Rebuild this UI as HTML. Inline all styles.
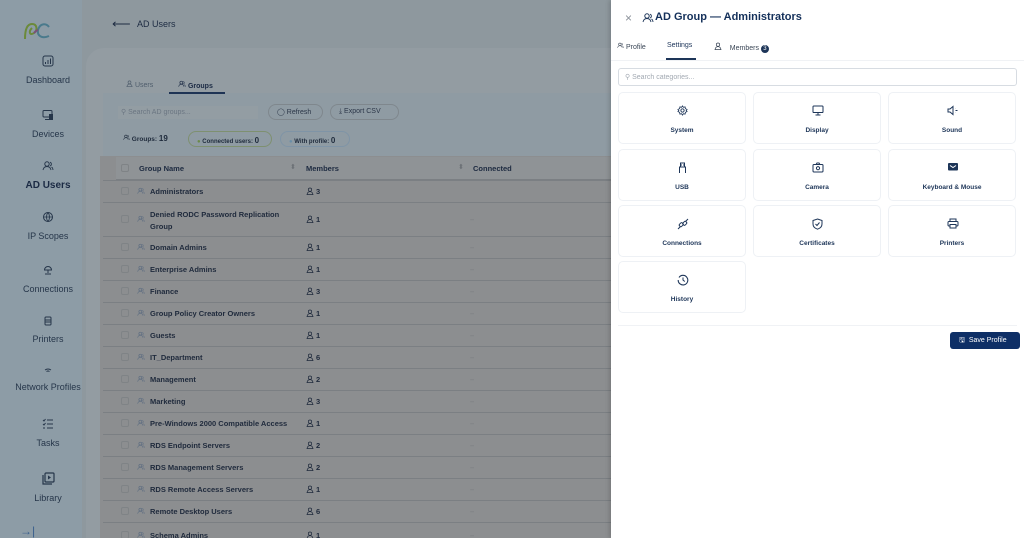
<!DOCTYPE html>
<html><head><meta charset="utf-8"><style>
*{box-sizing:border-box;margin:0;padding:0}
html,body{width:1024px;height:538px;overflow:hidden}
body{font-family:"Liberation Sans",sans-serif;background:#8e989e;position:relative}
.abs{position:absolute}
.side{left:0;top:0;width:82px;height:538px;background:#8d9ca6}
.nav{position:absolute;left:0;width:96px;text-align:center;font-size:9px;color:#26364a}
.nav svg{display:block;margin:0 auto 8px}
.card{left:86px;top:48px;width:540px;height:490px;background:#939ca2;border-radius:18px 0 0 0}
.tbl{left:100px;top:156px;width:511px;height:382px;background:#8c8e90}
.row{position:absolute;left:103px;width:508px;border-top:1px solid #7b7f83;font-size:7.5px;color:#1f2a3c;font-weight:bold}
.row .cb{position:absolute;left:18px;width:8px;height:8px;border:1px solid #7f8386;border-radius:2px}
.row .nm{position:absolute;left:47px}
.row .ic{position:absolute;left:34px;width:8px;height:8px}
.row .mb{position:absolute;left:203px}
.row .mb svg{vertical-align:-1px;margin-right:2px}
.row .dash{position:absolute;left:367px;color:#7d8184}
.drawer{left:611px;top:0;width:413px;height:538px;background:#fff;box-shadow:-2px 0 4px rgba(0,0,0,.15)}
.tile{position:absolute;width:128px;height:52px;border:1px solid #eef1f5;border-radius:5px;text-align:center;font-size:6.5px;font-weight:bold;color:#1d3558}
.tile svg{position:absolute;left:58px;top:12px}
.tile span{position:absolute;left:0;right:0;top:34px}
</style></head><body>
<svg width="0" height="0" style="position:absolute"><defs>
<symbol id="grp" viewBox="0 0 12 12"><circle cx="5" cy="4" r="2.2" fill="none" stroke="currentColor"/><path d="M1 10c.5-2.5 2-3.5 4-3.5s3.5 1 4 3.5M8 2.2a2 2 0 0 1 0 3.8M9.5 7c1 .6 1.4 1.6 1.5 3" fill="none" stroke="currentColor" stroke-width=".9"/></symbol>
<symbol id="usr" viewBox="0 0 12 12"><circle cx="6" cy="4" r="2.5" fill="none" stroke="currentColor" stroke-width="1.1"/><path d="M1.5 11.5c.5-3 2.2-4.5 4.5-4.5s4 1.5 4.5 4.5z" fill="none" stroke="currentColor" stroke-width="1.1"/></symbol>
</defs></svg>
<div class="abs side"></div>
<svg class="abs" style="left:22px;top:20px" width="30" height="22" viewBox="0 0 30 22"><path d="M3 19 C3 10 5 4 10 4 C15 4 16 10 12 13 C8 16 6 12 10 8" fill="none" stroke="#6b8a3a" stroke-width="2"/><path d="M27 7 C24 3 18 3 16 10 C15 16 20 19 27 16" fill="none" stroke="#4a7a8c" stroke-width="2"/><path d="M12 13 C14 11 15 10 16 10" stroke="#7a4e7a" stroke-width="2" fill="none"/></svg>
<div class="nav" style="top:55px"><svg width="12" height="12" viewBox="0 0 12 12"><rect x="1" y="1" width="10" height="10" rx="2" fill="none" stroke="#26364a"/><path d="M3.5 9V7M6 9V5M8.5 9V3.5" stroke="#26364a"/></svg>Dashboard</div>
<div class="nav" style="top:109px"><svg width="12" height="12" viewBox="0 0 12 12"><rect x="1" y="1.5" width="9" height="6.5" rx="1" fill="none" stroke="#26364a"/><rect x="7" y="5" width="4" height="6" fill="#26364a"/><path d="M3 10.5h4" stroke="#26364a"/></svg>Devices</div>
<div class="nav" style="top:160px;font-size:10px;font-weight:bold;color:#1b2a44"><svg width="12" height="12" style="color:#26364a"><use href="#grp"/></svg>AD Users</div>
<div class="nav" style="top:211px"><svg width="12" height="12" viewBox="0 0 12 12"><circle cx="6" cy="6" r="4.5" fill="none" stroke="#26364a"/><path d="M1.5 6h9M6 1.5c-2 2.5-2 6.5 0 9M6 1.5c2 2.5 2 6.5 0 9" fill="none" stroke="#26364a" stroke-width=".8"/></svg>IP Scopes</div>
<div class="nav" style="top:262px"><svg width="12" height="14" viewBox="0 0 12 14"><path d="M2.5 8a3.5 3.5 0 1 1 7 0z" fill="none" stroke="#26364a"/><path d="M6 8v3M3 12h6" stroke="#26364a"/></svg>Connections</div>
<div class="nav" style="top:316px"><svg width="10" height="10" viewBox="0 0 10 10"><rect x="2" y="1" width="6" height="8" rx="1" fill="none" stroke="#26364a"/><path d="M2 4h6M2 6h6" stroke="#26364a"/></svg>Printers</div>
<div class="nav" style="top:368px"><svg width="8" height="6" viewBox="0 0 8 6"><path d="M1 2q3-2 6 0M2.5 3.5q1.5-1 3 0" fill="none" stroke="#26364a"/></svg>Network Profiles</div>
<div class="nav" style="top:418px"><svg width="12" height="12" viewBox="0 0 12 12"><path d="M5 2h6M5 6h6M5 10h6M1 2l1 1 1.5-2M1 6l1 1 1.5-2M1 10h2" fill="none" stroke="#26364a"/></svg>Tasks</div>
<div class="nav" style="top:472px"><svg width="13" height="13" viewBox="0 0 13 13"><rect x="3" y="1" width="9" height="9" rx="1" fill="none" stroke="#26364a" stroke-width="1.2"/><path d="M1 3v9h9" fill="none" stroke="#26364a" stroke-width="1.2"/><path d="M6 3.5v4l3-2z" fill="#26364a"/></svg>Library</div>
<div class="abs" style="left:20px;top:524px;color:#3a5f8c;font-size:12px">→|</div>

<div class="abs" style="left:112px;top:16px;font-size:13px;color:#1d2b42">⟵</div>
<div class="abs" style="left:137px;top:19px;font-size:9px;color:#1d2b42">AD Users</div>
<div class="abs card"></div>
<div class="abs" style="left:103px;top:93px;width:508px;height:63px;background:#8f9ba3"></div>
<div class="abs" style="left:126px;top:80px;font-size:7px;color:#4f5d6c"><svg width="7" height="7" style="color:#4f5d6c"><use href="#usr"/></svg> Users</div>
<div class="abs" style="left:178px;top:80px;font-size:7px;color:#1b2a44;font-weight:bold"><svg width="8" height="8" style="color:#1b2a44"><use href="#grp"/></svg> Groups</div>
<div class="abs" style="left:169px;top:92px;width:56px;height:2px;background:#1e3354"></div>
<div class="abs" style="left:118px;top:106px;width:140px;height:13px;background:#939da3;font-size:7px;color:#6b7682;padding:2px 3px">⚲ Search AD groups...</div>
<div class="abs" style="left:268px;top:104px;width:55px;height:16px;border:1px solid #7f878d;border-radius:8px;font-size:7px;color:#2b3648;padding:3px 0 0 8px">◯ Refresh</div>
<div class="abs" style="left:330px;top:104px;width:69px;height:16px;border:1px solid #7f878d;border-radius:8px;font-size:7px;color:#2b3648;padding:3px 0 0 8px">⤓ Export CSV</div>
<div class="abs" style="left:123px;top:134px;font-size:6.5px;color:#1e2a3b;font-weight:bold"><svg width="7" height="7" style="color:#1e2a3b"><use href="#grp"/></svg> Groups: <span style="font-size:8px">19</span></div>
<div class="abs" style="left:188px;top:131px;width:84px;height:16px;border:1px solid #7e9070;border-radius:8px;font-size:6px;color:#1e2a3b;font-weight:bold;padding:4px 0 0 8px"><span style="color:#6b8a4a">●</span> Connected users: <span style="font-size:8px">0</span></div>
<div class="abs" style="left:280px;top:131px;width:70px;height:16px;border:1px solid #7f94a6;border-radius:8px;font-size:6px;color:#1e2a3b;font-weight:bold;padding:4px 0 0 8px"><span style="color:#6b8fa8">●</span> With profile: <span style="font-size:8px">0</span></div>
<div class="abs tbl"></div>
<div class="abs" style="left:116px;top:157px;width:495px;height:23px;background:#8f9396;border-bottom:1px solid #7b7f83"></div>
<div class="abs" style="left:121px;top:164px;width:8px;height:8px;border:1px solid #7f8386;border-radius:2px"></div>
<div class="abs" style="left:139px;top:164px;font-size:7.5px;font-weight:bold;color:#1d2a40">Group Name</div>
<div class="abs" style="left:290px;top:163px;font-size:7px;color:#6b7075">⬍</div>
<div class="abs" style="left:306px;top:164px;font-size:7.5px;font-weight:bold;color:#1d2a40">Members</div>
<div class="abs" style="left:458px;top:163px;font-size:7px;color:#6b7075">⬍</div>
<div class="abs" style="left:473px;top:164px;font-size:7.5px;font-weight:bold;color:#1d2a40">Connected</div>

<div class="row" style="top:180px;height:22px"><div class="cb" style="top:6px"></div><svg class="ic" style="top:6px;color:#5c6c80"><use href="#grp"/></svg><div class="nm" style="top:6px">Administrators</div><div class="mb" style="top:6px"><svg width="8" height="8" style="color:#1f2a3c"><use href="#usr"/></svg>3</div></div>
<div class="row" style="top:202px;height:34px"><div class="cb" style="top:12px"></div><svg class="ic" style="top:12px;color:#5c6c80"><use href="#grp"/></svg><div class="nm" style="top:6px;line-height:12px">Denied RODC Password Replication<br>Group</div><div class="mb" style="top:12px"><svg width="8" height="8" style="color:#1f2a3c"><use href="#usr"/></svg>1</div><div class="dash" style="top:12px">–</div></div>
<div class="row" style="top:236px;height:22px"><div class="cb" style="top:6px"></div><svg class="ic" style="top:6px;color:#5c6c80"><use href="#grp"/></svg><div class="nm" style="top:6px">Domain Admins</div><div class="mb" style="top:6px"><svg width="8" height="8" style="color:#1f2a3c"><use href="#usr"/></svg>1</div><div class="dash" style="top:6px">–</div></div>
<div class="row" style="top:258px;height:22px"><div class="cb" style="top:6px"></div><svg class="ic" style="top:6px;color:#5c6c80"><use href="#grp"/></svg><div class="nm" style="top:6px">Enterprise Admins</div><div class="mb" style="top:6px"><svg width="8" height="8" style="color:#1f2a3c"><use href="#usr"/></svg>1</div><div class="dash" style="top:6px">–</div></div>
<div class="row" style="top:280px;height:22px"><div class="cb" style="top:6px"></div><svg class="ic" style="top:6px;color:#5c6c80"><use href="#grp"/></svg><div class="nm" style="top:6px">Finance</div><div class="mb" style="top:6px"><svg width="8" height="8" style="color:#1f2a3c"><use href="#usr"/></svg>3</div><div class="dash" style="top:6px">–</div></div>
<div class="row" style="top:302px;height:22px"><div class="cb" style="top:6px"></div><svg class="ic" style="top:6px;color:#5c6c80"><use href="#grp"/></svg><div class="nm" style="top:6px">Group Policy Creator Owners</div><div class="mb" style="top:6px"><svg width="8" height="8" style="color:#1f2a3c"><use href="#usr"/></svg>1</div><div class="dash" style="top:6px">–</div></div>
<div class="row" style="top:324px;height:22px"><div class="cb" style="top:6px"></div><svg class="ic" style="top:6px;color:#5c6c80"><use href="#grp"/></svg><div class="nm" style="top:6px">Guests</div><div class="mb" style="top:6px"><svg width="8" height="8" style="color:#1f2a3c"><use href="#usr"/></svg>1</div><div class="dash" style="top:6px">–</div></div>
<div class="row" style="top:346px;height:22px"><div class="cb" style="top:6px"></div><svg class="ic" style="top:6px;color:#5c6c80"><use href="#grp"/></svg><div class="nm" style="top:6px">IT_Department</div><div class="mb" style="top:6px"><svg width="8" height="8" style="color:#1f2a3c"><use href="#usr"/></svg>6</div><div class="dash" style="top:6px">–</div></div>
<div class="row" style="top:368px;height:22px"><div class="cb" style="top:6px"></div><svg class="ic" style="top:6px;color:#5c6c80"><use href="#grp"/></svg><div class="nm" style="top:6px">Management</div><div class="mb" style="top:6px"><svg width="8" height="8" style="color:#1f2a3c"><use href="#usr"/></svg>2</div><div class="dash" style="top:6px">–</div></div>
<div class="row" style="top:390px;height:22px"><div class="cb" style="top:6px"></div><svg class="ic" style="top:6px;color:#5c6c80"><use href="#grp"/></svg><div class="nm" style="top:6px">Marketing</div><div class="mb" style="top:6px"><svg width="8" height="8" style="color:#1f2a3c"><use href="#usr"/></svg>3</div><div class="dash" style="top:6px">–</div></div>
<div class="row" style="top:412px;height:22px"><div class="cb" style="top:6px"></div><svg class="ic" style="top:6px;color:#5c6c80"><use href="#grp"/></svg><div class="nm" style="top:6px">Pre-Windows 2000 Compatible Access</div><div class="mb" style="top:6px"><svg width="8" height="8" style="color:#1f2a3c"><use href="#usr"/></svg>1</div><div class="dash" style="top:6px">–</div></div>
<div class="row" style="top:434px;height:22px"><div class="cb" style="top:6px"></div><svg class="ic" style="top:6px;color:#5c6c80"><use href="#grp"/></svg><div class="nm" style="top:6px">RDS Endpoint Servers</div><div class="mb" style="top:6px"><svg width="8" height="8" style="color:#1f2a3c"><use href="#usr"/></svg>2</div><div class="dash" style="top:6px">–</div></div>
<div class="row" style="top:456px;height:22px"><div class="cb" style="top:6px"></div><svg class="ic" style="top:6px;color:#5c6c80"><use href="#grp"/></svg><div class="nm" style="top:6px">RDS Management Servers</div><div class="mb" style="top:6px"><svg width="8" height="8" style="color:#1f2a3c"><use href="#usr"/></svg>2</div><div class="dash" style="top:6px">–</div></div>
<div class="row" style="top:478px;height:22px"><div class="cb" style="top:6px"></div><svg class="ic" style="top:6px;color:#5c6c80"><use href="#grp"/></svg><div class="nm" style="top:6px">RDS Remote Access Servers</div><div class="mb" style="top:6px"><svg width="8" height="8" style="color:#1f2a3c"><use href="#usr"/></svg>1</div><div class="dash" style="top:6px">–</div></div>
<div class="row" style="top:500px;height:22px"><div class="cb" style="top:6px"></div><svg class="ic" style="top:6px;color:#5c6c80"><use href="#grp"/></svg><div class="nm" style="top:6px">Remote Desktop Users</div><div class="mb" style="top:6px"><svg width="8" height="8" style="color:#1f2a3c"><use href="#usr"/></svg>6</div><div class="dash" style="top:6px">–</div></div>
<div class="row" style="top:522px;height:16px"><div class="cb" style="top:8px"></div><svg class="ic" style="top:8px;color:#5c6c80"><use href="#grp"/></svg><div class="nm" style="top:8px">Schema Admins</div><div class="mb" style="top:8px"><svg width="8" height="8" style="color:#1f2a3c"><use href="#usr"/></svg>1</div><div class="dash" style="top:8px">–</div></div>

<div class="abs drawer">
 <div class="abs" style="left:14px;top:11px;font-size:12px;color:#8a9099">×</div>
 <svg class="abs" style="left:31px;top:12px;color:#1d3558" width="12" height="12"><use href="#grp"/></svg>
 <div class="abs" style="left:44px;top:11px;font-size:11px;font-weight:bold;color:#14305a">AD Group — Administrators</div>
 <div class="abs" style="left:6px;top:42px;font-size:7px;color:#3a4656"><svg width="7" height="7" style="color:#3a4656"><use href="#grp"/></svg> Profile</div>
 <div class="abs" style="left:56px;top:42px;font-size:7px;color:#1b3358">Settings</div>
 <div class="abs" style="left:55px;top:58px;width:30px;height:1.5px;background:#1d3558"></div>
 <div class="abs" style="left:103px;top:42px;font-size:7px;color:#3a4656"><svg width="8" height="8" style="color:#3a4656"><use href="#usr"/></svg>&nbsp;&nbsp;&nbsp; Members <span style="display:inline-block;width:8px;height:8px;border-radius:4px;background:#1d3558;color:#fff;font-size:6px;text-align:center;line-height:8px">3</span></div>
 <div class="abs" style="left:0;top:60px;width:413px;height:1px;background:#f0f2f5"></div>
 <div class="abs" style="left:7px;top:68px;width:399px;height:18px;border:1px solid #d7dce2;border-radius:3px;font-size:7px;color:#a2a9b2;padding:4px 6px">⚲ Search categories...</div>
 <div class="tile" style="left:7px;top:92px"><svg width="11" height="11" viewBox="0 0 12 12"><circle cx="6" cy="6" r="1.8" fill="none" stroke="#1d3558"/><path d="M6 1l1 1.5 1.8-.4.4 1.8L11 5l-1 1 1 1-1.8 1.1-.4 1.8L7 9.5 6 11 5 9.5l-1.8.4-.4-1.8L1 7l1-1-1-1 1.8-1.1.4-1.8L5 2.5z" fill="none" stroke="#1d3558" stroke-width=".9"/></svg><span>System</span></div>
 <div class="tile" style="left:142px;top:92px"><svg width="12" height="11" viewBox="0 0 12 11"><rect x="1" y="1" width="10" height="6.5" rx=".8" fill="none" stroke="#1d3558"/><path d="M6 7.5V10M3.5 10h5" stroke="#1d3558"/></svg><span>Display</span></div>
 <div class="tile" style="left:277px;top:92px"><svg width="12" height="11" viewBox="0 0 12 11"><path d="M1 4h2l3-2.5v8L3 7H1z" fill="none" stroke="#1d3558"/><path d="M8.5 3.5v.1M8.5 5.5h2M8.5 7.5v.1" stroke="#1d3558"/></svg><span>Sound</span></div>
 <div class="tile" style="left:7px;top:149px"><svg width="11" height="12" viewBox="0 0 11 12"><path d="M2.5 11V5h6v6M2 5h7M3.5 5V1h4v4M4.5 2.5v1M6.5 2.5v1" fill="none" stroke="#1d3558"/></svg><span>USB</span></div>
 <div class="tile" style="left:142px;top:149px"><svg width="12" height="11" viewBox="0 0 12 11"><rect x="1" y="2.5" width="10" height="7.5" rx="1" fill="none" stroke="#1d3558"/><path d="M4 2.5l1-1.5h2l1 1.5" fill="none" stroke="#1d3558"/><circle cx="6" cy="6.2" r="1.6" fill="none" stroke="#1d3558"/></svg><span>Camera</span></div>
 <div class="tile" style="left:277px;top:149px"><svg width="12" height="10" viewBox="0 0 12 10"><rect x="1" y="1" width="10" height="7.5" rx="1" fill="#1d3558"/><path d="M3 3.5l3 2 3-2" stroke="#fff" fill="none"/></svg><span>Keyboard &amp; Mouse</span></div>
 <div class="tile" style="left:7px;top:205px"><svg width="12" height="12" viewBox="0 0 12 12"><path d="M1 11l2.5-2.5M11 1L8.5 3.5" stroke="#1d3558"/><rect x="2.2" y="5.2" width="4" height="3" rx="1.2" transform="rotate(-45 4.2 6.7)" fill="none" stroke="#1d3558"/><rect x="5.8" y="3.8" width="4" height="3" rx="1.2" transform="rotate(-45 7.8 5.3)" fill="none" stroke="#1d3558"/></svg><span>Connections</span></div>
 <div class="tile" style="left:142px;top:205px"><svg width="11" height="12" viewBox="0 0 11 12"><path d="M5.5 1L10 2.5V6c0 3-2.5 4.5-4.5 5.2C3.5 10.5 1 9 1 6V2.5z" fill="none" stroke="#1d3558"/><path d="M3.5 6l1.5 1.5 2.5-3" fill="none" stroke="#1d3558"/></svg><span>Certificates</span></div>
 <div class="tile" style="left:277px;top:205px"><svg width="12" height="11" viewBox="0 0 12 11"><rect x="3" y="1" width="6" height="2.5" fill="none" stroke="#1d3558"/><rect x="1" y="3.5" width="10" height="4.5" rx="1" fill="none" stroke="#1d3558"/><rect x="3" y="6.5" width="6" height="3.5" fill="#fff" stroke="#1d3558"/></svg><span>Printers</span></div>
 <div class="tile" style="left:7px;top:261px"><svg width="12" height="12" viewBox="0 0 12 12"><path d="M2 3.5A4.8 4.8 0 1 1 1.2 6" fill="none" stroke="#1d3558" stroke-width="1.1"/><path d="M6 3.5V6l1.8 1.5" fill="none" stroke="#1d3558"/></svg><span>History</span></div>
 <div class="abs" style="left:7px;top:325px;width:399px;height:1px;background:#f0f2f5"></div>
 <div class="abs" style="left:339px;top:332px;width:70px;height:17px;background:#0e2f66;border-radius:3px;color:#fff;font-size:7px;padding:4px 0 0 9px">🖫&nbsp; Save Profile</div>
</div>
</body></html>
